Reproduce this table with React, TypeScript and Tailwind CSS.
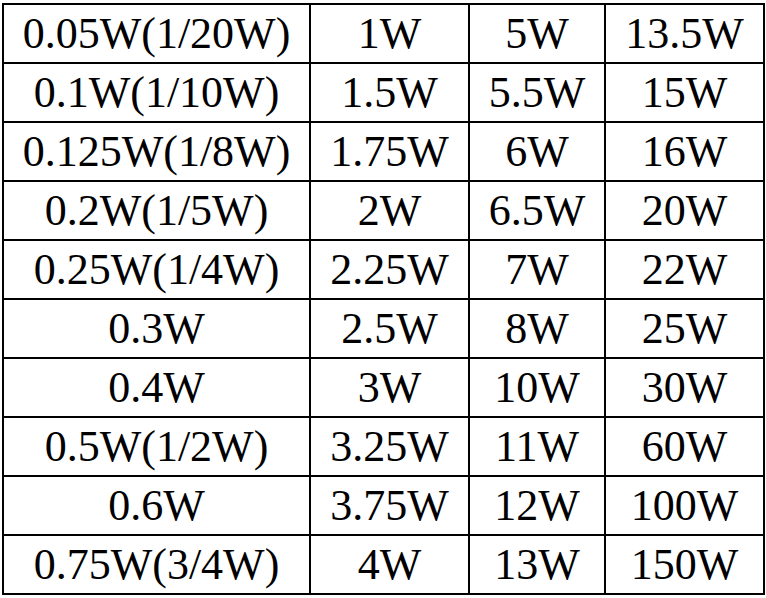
const rows = [
  ["0.05W(1/20W)", "1W", "5W", "13.5W"],
  ["0.1W(1/10W)", "1.5W", "5.5W", "15W"],
  ["0.125W(1/8W)", "1.75W", "6W", "16W"],
  ["0.2W(1/5W)", "2W", "6.5W", "20W"],
  ["0.25W(1/4W)", "2.25W", "7W", "22W"],
  ["0.3W", "2.5W", "8W", "25W"],
  ["0.4W", "3W", "10W", "30W"],
  ["0.5W(1/2W)", "3.25W", "11W", "60W"],
  ["0.6W", "3.75W", "12W", "100W"],
  ["0.75W(3/4W)", "4W", "13W", "150W"],
];

const widths = ["w-[307px]", "w-[159px]", "w-[136px]", "w-[159px]"];

export default function App() {
  return (
    <div className="w-[766px] h-[598px] bg-white pl-[2px] pt-[3px]">
      <table
        className="border-collapse table-fixed text-black text-[44px] leading-none"
        style={{ fontFamily: '"Liberation Serif", "Times New Roman", serif' }}
      >
        <tbody>
          {rows.map((row, i) => (
            <tr key={i} className="h-[59px]">
              {row.map((cell, j) => (
                <td
                  key={j}
                  className={`${widths[j]} border-2 border-black text-center align-middle p-0 whitespace-nowrap`}
                >
                  {cell}
                </td>
              ))}
            </tr>
          ))}
        </tbody>
      </table>
    </div>
  );
}
